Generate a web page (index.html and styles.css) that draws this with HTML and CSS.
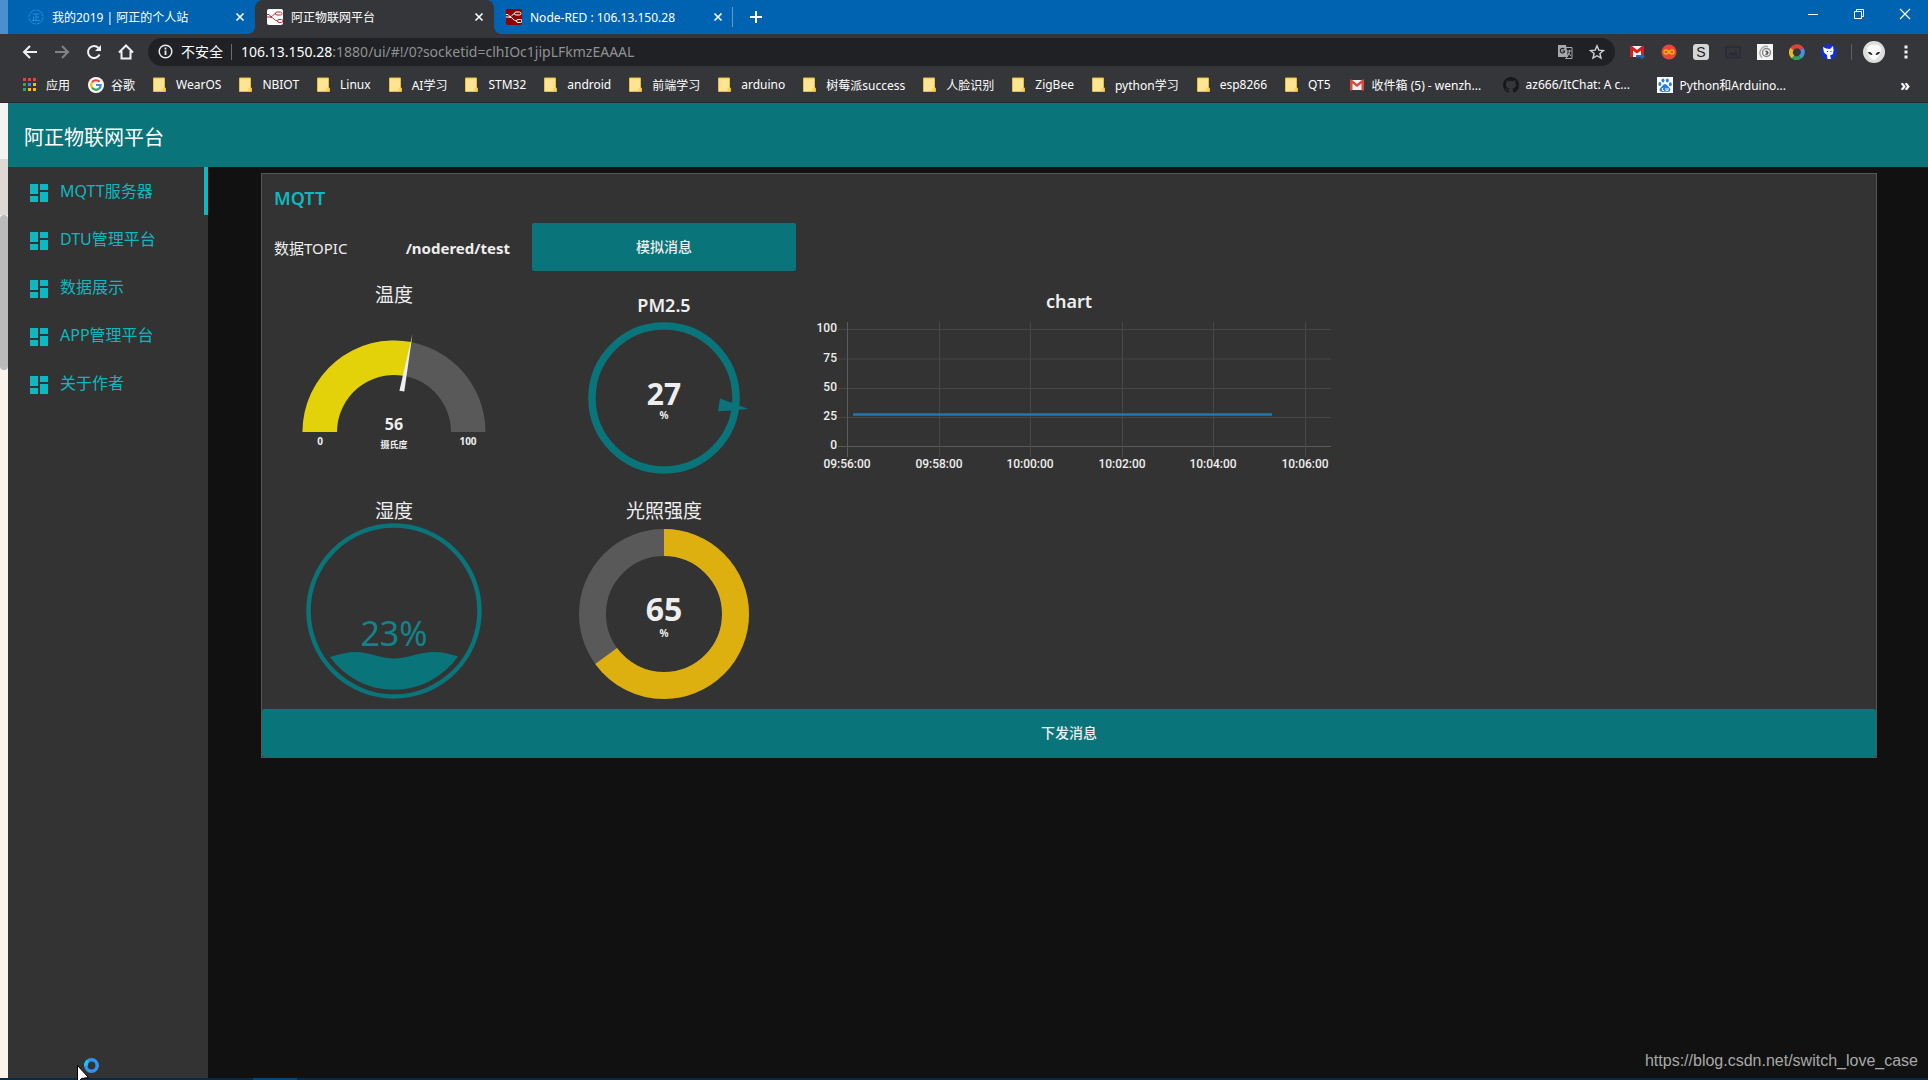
FILE: index.html
```
<!DOCTYPE html>
<html lang="zh-CN">
<head>
    <meta charset="UTF-8">
    <title>阿正物联网平台</title>
    <link rel="stylesheet" href="styles.css">
</head>
<body>
    <svg class="defs" width="0" height="0">
        <symbol id="folder" viewBox="0 0 16 16">
            <path d="M.5 1h11v10h1v3.500H.5z" fill="#ffe593" stroke="#e8bf3c"/>
            <path d="M9.500 11h2.500v3h-2.500z" fill="#f7cf52"/>
        </symbol>
        <symbol id="dashboard" viewBox="0 0 24 24">
            <path d="M3 13h8V3H3v10zm0 8h8v-6H3v6zm10 0h8V11h-8v10zm0-18v6h8V3h-8z" fill="currentColor"/>
        </symbol>
        <symbol id="close" viewBox="0 0 10 10">
            <path d="M1.500 1.500l7 7M8.500 1.500l-7 7" stroke="#fff" stroke-width="1.600"/>
        </symbol>
        <symbol id="nodes" viewBox="0 0 16 16">
            <path d="M0 8h3c3.500 0 3-3.500 6-3.500M3 8c4 0 4 4 8 4M0 5.500h2l2 2" fill="none" stroke="currentColor"/>
            <rect x="8.500" y="3" width="6.500" height="3" rx="1.500" fill="none" stroke="currentColor"/>
            <rect x="10.500" y="10.500" width="5.500" height="3" rx="1.500" fill="none" stroke="currentColor"/>
        </symbol>
    </svg>

    <header class="browser">
        <div class="tabstrip">
            <div class="tab">
                <svg class="favicon" viewBox="0 0 16 16"><circle cx="8" cy="8" r="7" fill="none" stroke="#1d8fe0" stroke-dasharray="10 1"/><path d="M4.500 5h7M8 5v6M8 8h3M5.500 7.500V11M4 11.500h8" fill="none" stroke="#1d8fe0"/></svg>
                <span class="tab-title">我的2019 | 阿正的个人站</span>
                <button class="tab-close" aria-label="关闭"><svg width="10" height="10"><use href="#close"/></svg></button>
            </div>
            <div class="tab active">
                <svg class="favicon light" viewBox="0 0 16 16"><use href="#nodes"/></svg>
                <span class="tab-title">阿正物联网平台</span>
                <button class="tab-close" aria-label="关闭"><svg width="10" height="10"><use href="#close"/></svg></button>
            </div>
            <div class="tab last">
                <svg class="favicon red" viewBox="0 0 16 16"><use href="#nodes"/></svg>
                <span class="tab-title">Node-RED : 106.13.150.28</span>
                <button class="tab-close" aria-label="关闭"><svg width="10" height="10"><use href="#close"/></svg></button>
            </div>
            <button class="new-tab" aria-label="新标签页"><svg width="14" height="14" viewBox="0 0 14 14"><path d="M7 1v12M1 7h12" stroke="#fff" stroke-width="2"/></svg></button>
            <div class="window-buttons">
                <button aria-label="最小化"><svg width="12" height="12" viewBox="0 0 12 12"><path d="M1 6.500h10" stroke="#fff"/></svg></button>
                <button aria-label="还原"><svg width="12" height="12" viewBox="0 0 12 12"><path d="M1.500 3.500h7v7h-7zM3.500 3.500v-2h7v7h-2" fill="none" stroke="#fff"/></svg></button>
                <button aria-label="关闭窗口"><svg width="12" height="12" viewBox="0 0 12 12"><path d="M1 1l10 10M11 1L1 11" stroke="#fff" stroke-width="1.200"/></svg></button>
            </div>
        </div>

        <div class="toolbar">
            <button class="nav-button" aria-label="后退"><svg width="16" height="16" viewBox="0 0 16 16"><path d="M15 8H2M8 2L2 8l6 6" fill="none" stroke="#f1f1f1" stroke-width="2"/></svg></button>
            <button class="nav-button" aria-label="前进"><svg width="16" height="16" viewBox="0 0 16 16"><path d="M1 8h13M8 2l6 6-6 6" fill="none" stroke="#828385" stroke-width="2"/></svg></button>
            <button class="nav-button" aria-label="刷新"><svg width="16" height="16" viewBox="0 0 16 16"><path d="M13.500 10.500A6 6 0 1 1 12.500 4" fill="none" stroke="#f1f1f1" stroke-width="2"/><path d="M15 1v6H9z" fill="#f1f1f1"/></svg></button>
            <button class="nav-button" aria-label="主页"><svg width="16" height="16" viewBox="0 0 16 16"><path d="M1 8.500L8 1.500l7 7M3.500 7v7.500h9V7" fill="none" stroke="#f1f1f1" stroke-width="2"/></svg></button>
            <div class="address">
                <svg width="15" height="15" viewBox="0 0 15 15"><circle cx="7.500" cy="7.500" r="6.300" fill="none" stroke="#e8eaed" stroke-width="1.500"/><path d="M7.500 6.500v4.500M7.500 3.500v2" stroke="#e8eaed" stroke-width="1.800"/></svg>
                <label class="security" for="url">不安全</label>
                <span class="host">106.13.150.28</span>
                <input id="url" class="path" type="text" value=":1880/ui/#!/0?socketid=clhIOc1jipLFkmzEAAAL">
                <button aria-label="翻译"><svg width="16" height="16" viewBox="0 0 16 16"><path d="M1 1h8l2 12H1z" fill="#a7a8aa"/><path d="M8.500 3.500h6.500v11H8.500l2-2" fill="none" stroke="#a7a8aa"/><path d="M7.200 5A2.300 2.300 0 1 0 7.500 8V7H5.500" fill="none" stroke="#202124" stroke-width="1.200"/><path d="M10 7h4.500M12.500 6v1c0 2-1 4-2 5M11 8.500l3 3.500" fill="none" stroke="#a7a8aa"/></svg></button>
                <button aria-label="收藏"><svg width="16" height="16" viewBox="0 0 16 16"><path d="M8 1.800l1.800 4.300 4.700.4-3.600 3 1.100 4.600L8 11.700l-4 2.400 1.100-4.600-3.600-3 4.700-.4z" fill="none" stroke="#d0d1d3" stroke-width="1.400"/></svg></button>
            </div>
            <div class="extensions">
                <button aria-label="Gmail"><svg width="16" height="16" viewBox="0 0 16 16"><path d="M1 2h14v11H1z" fill="#f4f4f4"/><path d="M1 13V2h2l5 4 5-4h2v11h-3V6.500L8 9.500l-4-3V13z" fill="#d81b1b"/><path d="M7 11h5V9l4 3.500-4 3V13.500H7z" fill="#2566b8"/></svg></button>
                <button aria-label="Infinity"><svg width="16" height="16" viewBox="0 0 16 16"><circle cx="8" cy="8" r="7.500" fill="#e8453c"/><path d="M8 8c-2-3-5-2.500-5 0s3 3 5 0 5-2.500 5 0-3 3-5 0z" fill="none" stroke="#f7b500" stroke-width="1.500"/></svg></button>
                <button aria-label="S"><svg width="16" height="16" viewBox="0 0 16 16"><rect width="16" height="16" rx="3" fill="#d5d6d6"/><text class="ext-letter" x="8" y="13">S</text></svg></button>
                <button aria-label="图片"><svg width="16" height="16" viewBox="0 0 16 16"><path d="M1 3h14v10.500H1z" fill="none" stroke="#2a2a3c" stroke-width="1.500"/><path d="M3 11.500l3-4 2 2 3-3 2.500 5z" fill="#2a2a3c"/></svg></button>
                <button aria-label="监视"><svg width="16" height="16" viewBox="0 0 16 16"><path d="M0 0h16v16H0z" fill="#f5f5f5"/><path d="M11 2.500A6.500 6.500 0 0 0 5 13.500" fill="none" stroke="#aaa" stroke-width="1.400"/><circle cx="9.500" cy="8.500" r="4" fill="none" stroke="#888" stroke-width="1.500"/><path d="M8 7.500a2 2 0 1 1 0 2.500l2-1z" fill="#555"/></svg></button>
                <button aria-label="色环"><svg width="16" height="16" viewBox="0 0 16 16"><g fill="none" stroke-width="4"><path d="M3 5a6 6 0 0 1 10 0" stroke="#db4437"/><path d="M13 5a6 6 0 0 1-2 8" stroke="#4b8fe0"/><path d="M11 13a6 6 0 0 1-7 0" stroke="#27a35a"/><path d="M4 13a6 6 0 0 1-1-8" stroke="#e8b92c"/></g></svg></button>
                <button aria-label="猫"><svg width="16" height="16" viewBox="0 0 16 16"><circle cx="8" cy="8" r="7.800" fill="#1330d8"/><path d="M2 3l3 1.500 4 .5 3-3 .5 4-.5 4-3 1.500 1 3.500H6.500L6 11 3 8.500z" fill="#fff"/><path d="M6 7l1 1M10 7v1" stroke="#1330d8"/></svg></button>
            </div>
            <button class="avatar" aria-label="用户"><svg width="22" height="22" viewBox="0 0 22 22"><circle cx="11" cy="11" r="11" fill="#dedede"/><path d="M4 8c0-6 14-6 14 0 0 5-4 11-7 11S4 13 4 8z" fill="#fafafa"/><path d="M5 11c3-.5 4 1 4.500 3C7 14 5.500 13 5 11zM17 11c-3-.5-4 1-4.500 3 2.500 0 4-1 4.500-3z" fill="#222"/></svg></button>
            <button class="menu" aria-label="菜单"><svg width="4" height="16" viewBox="0 0 4 16"><path d="M.5 1.500h3v3h-3zM.5 6.500h3v3h-3zM.5 11.500h3v3h-3z" fill="#f1f1f1"/></svg></button>
        </div>

        <nav class="bookmarks">
            <a href="#"><svg class="mark" viewBox="0 0 16 16"><path d="M0 1h3v3H0zM5 1h3v3H5zM10 1h3v3h-3z" fill="#ea4335"/><path d="M0 6h3v3H0z" fill="#34a853"/><path d="M5 6h3v3H5z" fill="#4285f4"/><path d="M10 6h3v3h-3z" fill="#fbbc05"/><path d="M0 11h3v3H0z" fill="#34a853"/><path d="M5 11h3v3H5zM10 11h3v3h-3z" fill="#fbbc05"/></svg>应用</a>
            <a href="#"><svg class="mark" viewBox="0 0 16 16"><circle cx="8" cy="8" r="8" fill="#fff"/><g fill="none" stroke-width="2.200"><path d="M4 5.500A4.700 4.700 0 0 1 11.500 4.800" stroke="#ea4335"/><path d="M4 10.500a4.700 4.700 0 0 1 0-5" stroke="#fbbc05"/><path d="M11 11.700A4.700 4.700 0 0 1 4 10.500" stroke="#34a853"/><path d="M8 8h4.700a4.700 4.700 0 0 1-1.700 3.700" stroke="#4285f4"/></g></svg>谷歌</a>
            <a href="#"><svg class="mark"><use href="#folder"/></svg>WearOS</a>
            <a href="#"><svg class="mark"><use href="#folder"/></svg>NBIOT</a>
            <a href="#"><svg class="mark"><use href="#folder"/></svg>Linux</a>
            <a href="#"><svg class="mark"><use href="#folder"/></svg>AI学习</a>
            <a href="#"><svg class="mark"><use href="#folder"/></svg>STM32</a>
            <a href="#"><svg class="mark"><use href="#folder"/></svg>android</a>
            <a href="#"><svg class="mark"><use href="#folder"/></svg>前端学习</a>
            <a href="#"><svg class="mark"><use href="#folder"/></svg>arduino</a>
            <a href="#"><svg class="mark"><use href="#folder"/></svg>树莓派success</a>
            <a href="#"><svg class="mark"><use href="#folder"/></svg>人脸识别</a>
            <a href="#"><svg class="mark"><use href="#folder"/></svg>ZigBee</a>
            <a href="#"><svg class="mark"><use href="#folder"/></svg>python学习</a>
            <a href="#"><svg class="mark"><use href="#folder"/></svg>esp8266</a>
            <a href="#"><svg class="mark"><use href="#folder"/></svg>QT5</a>
            <a class="site" href="#"><svg class="mark" viewBox="0 0 16 16"><path d="M1 3h14v10H1z" fill="#f1f1f1"/><path d="M1 13.500V2.500h1.500L8 7l5.500-4.500H15v11h-2.500V6.500L8 10 3.500 6.500v7z" fill="#d54b3d"/></svg>收件箱 (5) - wenzh...</a>
            <a class="site" href="#"><svg class="mark" viewBox="0 0 16 16"><path fill="#17181b" d="M8 0C3.580 0 0 3.580 0 8c0 3.540 2.290 6.530 5.470 7.590.4.070.55-.17.55-.38 0-.19-.01-.82-.01-1.490-2.010.37-2.530-.49-2.690-.94-.09-.23-.48-.94-.82-1.130-.28-.15-.68-.52-.01-.53.63-.01 1.080.58 1.230.82.72 1.210 1.870.87 2.330.66.070-.52.28-.87.51-1.070-1.780-.2-3.640-.89-3.640-3.950 0-.87.31-1.590.82-2.150-.08-.2-.36-1.020.08-2.120 0 0 .67-.21 2.200.82a7.600 7.600 0 0 1 4 0c1.530-1.040 2.200-.82 2.200-.82.44 1.100.16 1.920.08 2.120.51.56.82 1.270.82 2.150 0 3.070-1.870 3.750-3.650 3.950.29.25.54.73.54 1.480 0 1.070-.01 1.930-.01 2.200 0 .21.15.46.55.38A8 8 0 0 0 16 8c0-4.420-3.580-8-8-8z"/></svg>az666/ItChat: A c...</a>
            <a class="site" href="#"><svg class="mark" viewBox="0 0 16 16"><path d="M0 0h16v16H0z" fill="#fff"/><g fill="#2b7de9"><ellipse cx="2.800" cy="7" rx="1.500" ry="2"/><ellipse cx="6" cy="3.500" rx="1.500" ry="2.100"/><ellipse cx="10.300" cy="3.500" rx="1.500" ry="2.100"/><ellipse cx="13.300" cy="7.200" rx="1.500" ry="2"/><path d="M8 7c2 0 3 2.500 4.500 3.800 2 2 .5 4.500-2 4.200-2-.2-3-.2-5 0-2.500.3-4-2.200-2-4.200C5 9.500 6 7 8 7z"/></g><path d="M5.500 11v2.500h1.500M9 11v2.500h2V11" fill="none" stroke="#fff"/></svg>Python和Arduino...</a>
            <button class="more">»</button>
        </nav>
    </header>

    <div class="page">
        <div class="behind">
            <div class="behind-white"></div>
            <div class="behind-beige"></div>
            <div class="behind-scroll"></div>
        </div>
        <div class="app">
            <header class="app-header"><h1>阿正物联网平台</h1></header>
            <div class="app-body">
                <nav class="sidebar">
                    <a class="selected" href="#"><svg width="24" height="24"><use href="#dashboard"/></svg>MQTT服务器</a>
                    <a href="#"><svg width="24" height="24"><use href="#dashboard"/></svg>DTU管理平台</a>
                    <a href="#"><svg width="24" height="24"><use href="#dashboard"/></svg>数据展示</a>
                    <a href="#"><svg width="24" height="24"><use href="#dashboard"/></svg>APP管理平台</a>
                    <a href="#"><svg width="24" height="24"><use href="#dashboard"/></svg>关于作者</a>
                </nav>
                <main class="content">
                    <section class="group">
                        <h2>MQTT</h2>
                        <div class="widgets">
                            <p class="topic"><span>数据TOPIC</span><b>/nodered/test</b></p>
                            <button class="action">模拟消息</button>

                            <svg class="gauge row-start" viewBox="0 0 264 210">
                                <text class="title" x="132" y="25">温度</text>
                                <path d="M40.500 155A91.500 91.500 0 0 1 223.500 155H189A57 57 0 0 0 75 155z" fill="#595959"/>
                                <path d="M40.500 155A91.500 91.500 0 0 1 149.100 65.100L142.700 99A57 57 0 0 0 75 155z" fill="#e3d209"/>
                                <path d="M150.500 57L142.300 114.600L137.400 113.700z" fill="#eee"/>
                                <text class="value small" x="132" y="153">56</text>
                                <text class="unit" x="132" y="171">摄氏度</text>
                                <text class="limit" x="58" y="168">0</text>
                                <text class="limit" x="206" y="168">100</text>
                            </svg>

                            <svg class="gauge" viewBox="0 0 264 210">
                                <text class="title latin" x="132" y="35">PM2.5</text>
                                <circle cx="132" cy="121" r="72" fill="none" stroke="#097479" stroke-width="7.500"/>
                                <path d="M216.500 132L188 121.500L186 134.500z" fill="#097479"/>
                                <text class="value" x="132" y="128">27</text>
                                <text class="limit" x="132" y="142">%</text>
                            </svg>

                            <svg class="chart" viewBox="0 0 534 210">
                                <text class="title latin" x="267" y="31">chart</text>
                                <g class="grid">
                                    <path d="M36 52.500H529M36 82H529M36 111.500H529M36 140.500H529"/>
                                    <path class="axis" d="M36 169.500H529M45.500 45V180"/>
                                    <path d="M137.500 45V180M228.500 45V180M320.500 45V180M411.500 45V180M503.500 45V180"/>
                                </g>
                                <path d="M51 137.500H470" stroke="#1f77b4" stroke-width="2.500"/>
                                <g class="ticks y">
                                    <text x="35" y="55">100</text>
                                    <text x="35" y="85">75</text>
                                    <text x="35" y="114">50</text>
                                    <text x="35" y="143">25</text>
                                    <text x="35" y="172">0</text>
                                </g>
                                <g class="ticks">
                                    <text x="45" y="191">09:56:00</text>
                                    <text x="137" y="191">09:58:00</text>
                                    <text x="228" y="191">10:00:00</text>
                                    <text x="320" y="191">10:02:00</text>
                                    <text x="411" y="191">10:04:00</text>
                                    <text x="503" y="191">10:06:00</text>
                                </g>
                            </svg>

                            <svg class="gauge row-start" viewBox="0 0 264 210">
                                <text class="title" x="132" y="25">湿度</text>
                                <circle cx="132" cy="118" r="85.500" fill="none" stroke="#097479" stroke-width="4.500"/>
                                <path d="M68 164C77 161 86 159 93.500 159C107 159 119 165.500 132 165.500S158 159 172 159C180 159 188 161 196 163.500A78.500 78.500 0 0 1 68 164z" fill="#097479"/>
                                <text class="liquid" x="132" y="153">23%</text>
                            </svg>

                            <svg class="gauge" viewBox="0 0 264 210">
                                <text class="title" x="132" y="25">光照强度</text>
                                <circle cx="132" cy="121" r="71.500" fill="none" stroke="#595959" stroke-width="27"/>
                                <circle cx="132" cy="121" r="71.500" fill="none" stroke="#ddb00f" stroke-width="27" pathLength="100" stroke-dasharray="65 100" transform="rotate(-90 132 121)"/>
                                <text class="value large" x="132" y="128">65</text>
                                <text class="limit" x="132" y="144">%</text>
                            </svg>
                        </div>
                        <button class="send">下发消息</button>
                    </section>
                </main>
            </div>
        </div>
    </div>
    <footer class="taskbar"></footer>

    <svg class="cursor" width="26" height="24" viewBox="0 0 26 24">
        <path d="M.5 9.500v17l4-4 7-1z" fill="#fff" stroke="#000"/>
        <circle cx="14.500" cy="9.500" r="5.700" fill="none" stroke="#2d96f0" stroke-width="3.500"/>
        <path d="M8.900 10a5.700 5.700 0 0 1 2-5" fill="none" stroke="#19c5ff" stroke-width="3.500"/>
    </svg>
    <div class="watermark">https://blog.csdn.net/switch_love_case</div>
</body>
</html>
```
FILE: styles.css
```
* {
    box-sizing: border-box;
}
body {
    margin: 0;
    height: 100vh;
    display: flex;
    flex-direction: column;
    overflow: hidden;
    background-color: #111;
    color: #eee;
    font-family: "Noto Sans", "Noto Sans CJK SC", sans-serif;
    font-size: 14px;
}
button {
    padding: 0;
    border: none;
    background: none;
    color: inherit;
    font: inherit;
}
a {
    color: inherit;
    text-decoration: none;
}
svg {
    flex: none;
}
.defs {
    position: absolute;
}

/* browser */
.browser {
    flex: none;
    background-color: #35363a;
    color: #fff;
    border-bottom: 1px solid #29292c;
}
.tabstrip {
    display: flex;
    height: 34px;
    padding-left: 8px;
    border-left: 8px solid #4a90cc;
    background-color: #0063b1;
}
.tab {
    position: relative;
    display: flex;
    align-items: center;
    width: 239px;
    padding: 0 10px 0 12px;
    gap: 8px;
    font-size: 12px;
}
.tab.active {
    background-color: #35363a;
    border-radius: 8px 8px 0 0;
}
.tab.active::before,
.tab.active::after {
    content: "";
    position: absolute;
    bottom: 0;
    width: 8px;
    height: 8px;
}
.tab.active::before {
    left: -8px;
    background: radial-gradient(circle at 0 0, transparent 8px, #35363a 8px);
}
.tab.active::after {
    right: -8px;
    background: radial-gradient(circle at 100% 0, transparent 8px, #35363a 8px);
}
.tab.last::after {
    content: "";
    position: absolute;
    right: 0;
    top: 7px;
    width: 1px;
    height: 20px;
    background-color: #5b9bd0;
}
.favicon {
    width: 16px;
    height: 16px;
}
.favicon.light {
    background-color: #fff;
    color: #a33;
    border-radius: 2px;
}
.favicon.red {
    background-color: #8f0000;
    color: #fff;
    border-radius: 2px;
}
.tab-title {
    flex: 1;
    white-space: nowrap;
}
.tab-close {
    display: flex;
}
.new-tab {
    display: flex;
    align-items: center;
    padding: 0 16px;
}
.window-buttons {
    display: flex;
    margin-left: auto;
}
.window-buttons button {
    width: 46px;
    height: 28px;
}
.toolbar {
    display: flex;
    align-items: center;
    height: 36px;
    padding: 0 20px 0 14px;
}
.nav-button {
    display: flex;
    justify-content: center;
    width: 32px;
}
.address {
    flex: 1;
    display: flex;
    align-items: center;
    height: 28px;
    margin-left: 6px;
    padding: 0 10px 1px;
    border-radius: 14px;
    background-color: #202124;
}
.security {
    margin: 0 9px 0 8px;
    padding-right: 8px;
    border-right: 1px solid #6b6c6f;
    line-height: 16px;
}
.path {
    flex: 1;
    padding: 0;
    border: none;
    background: none;
    color: #8f9194;
    font: inherit;
}
.address button {
    display: flex;
    margin-left: 16px;
}
.extensions {
    display: flex;
    gap: 16px;
    margin-left: 14px;
    padding-right: 14px;
    border-right: 1px solid #5f6063;
}
.extensions button,
.avatar,
.menu {
    display: flex;
}
.ext-letter {
    font: 14px "Liberation Sans", sans-serif;
    fill: #222;
    text-anchor: middle;
}
.avatar {
    margin: 0 19px 0 11px;
}
.bookmarks {
    display: flex;
    align-items: center;
    gap: 18px;
    height: 32px;
    padding: 0 18px 3px 23px;
    font-size: 12px;
}
.bookmarks a {
    display: flex;
    align-items: center;
    gap: 7px;
    white-space: nowrap;
}
.bookmarks .site {
    min-width: 136px;
}
.mark {
    width: 16px;
    height: 16px;
}
.more {
    margin-left: auto;
    font-size: 16px;
    font-weight: bold;
}

/* window edge left of the page */
.page {
    flex: 1;
    display: flex;
    min-height: 0;
}
.behind {
    flex: none;
    width: 8px;
    background-color: #fbf2ec;
}
.behind-white {
    height: 56px;
    background-color: #f4f4f4;
}
.behind-beige {
    height: 56px;
    background-color: #e0d8d2;
}
.behind-scroll {
    height: 155px;
    border-radius: 4px;
    background-color: #bbb;
}

/* dashboard */
.app {
    flex: 1;
    display: flex;
    flex-direction: column;
    min-width: 0;
}
.app-header {
    flex: none;
    display: flex;
    align-items: center;
    height: 64px;
    padding: 2px 16px 0;
    background-color: #097479;
    color: #fff;
}
h1 {
    margin: 0;
    font-size: 20px;
    font-weight: normal;
}
.app-body {
    flex: 1;
    display: flex;
}
.sidebar {
    flex: none;
    width: 200px;
    background-color: #333;
    color: #0eb8c0;
    font-size: 16px;
}
.sidebar a {
    display: flex;
    align-items: center;
    gap: 9px;
    height: 48px;
    padding: 0 0 2px 19px;
}
.sidebar svg {
    margin-top: 6px;
}
.sidebar .selected {
    border-right: 4px solid #0eb8c0;
}
.content {
    flex: 1;
    padding: 6px 51px 0 53px;
}
.group {
    border: 1px solid #555;
    background-color: #333;
}
h2 {
    margin: 0;
    padding: 12px 12px 13px;
    color: #0eb8c0;
    font-size: 18px;
    font-weight: 600;
    line-height: 24px;
}
.widgets {
    display: grid;
    grid-template-columns: 264px 264px 534px;
    grid-template-rows: 48px 210px 210px;
    gap: 6px;
    padding-bottom: 6px;
}
.topic {
    display: flex;
    align-items: center;
    justify-content: space-between;
    margin: 0;
    padding: 1px 16px 0 12px;
    font-size: 15px;
}
.action,
.send {
    padding-bottom: 2px;
    border-radius: 2px;
    background-color: #097479;
    font-weight: 500;
}
.send {
    display: block;
    width: 100%;
    height: 48px;
}
.gauge {
    width: 264px;
    height: 210px;
}
.row-start {
    grid-column: 1;
}
.chart {
    width: 534px;
    height: 210px;
}
.gauge,
.chart {
    fill: #eee;
    text-anchor: middle;
}
.title {
    font-size: 19px;
}
.title.latin {
    font-size: 18px;
    font-weight: 600;
}
.value {
    font-size: 30px;
    font-weight: bold;
}
.value.small {
    font-size: 16px;
}
.value.large {
    font-size: 32px;
}
.unit {
    font-size: 9px;
    font-weight: bold;
}
.limit {
    font-size: 10px;
    font-weight: bold;
}
.liquid {
    font-size: 34px;
    fill: #118389;
}
.grid path {
    stroke: #474747;
}
.grid .axis {
    stroke: #5a5a5a;
}
.ticks {
    font: 500 12px Roboto, sans-serif;
}
.ticks.y {
    text-anchor: end;
}

.taskbar {
    flex: none;
    height: 2px;
    background: linear-gradient(#04477c, #04477c) 253px 0 / 44px 2px no-repeat #0b2a42;
}
.cursor {
    position: absolute;
    left: 77px;
    bottom: 0;
    overflow: hidden;
}
.watermark {
    position: absolute;
    right: 10px;
    bottom: 10px;
    color: #a9a9a9;
    font: 16px "Liberation Sans", Arial, sans-serif;
}
```
